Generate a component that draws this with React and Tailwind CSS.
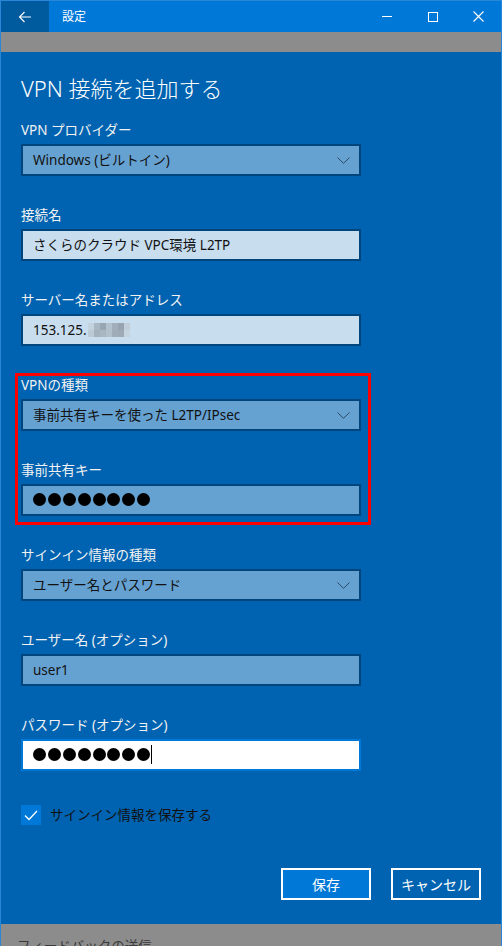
import React from "react";

const FONT = { fontFamily: '"Noto Sans", "Noto Sans CJK JP", sans-serif' };

function Chevron() {
  return (
    <svg width="13" height="7" viewBox="0 0 13 7" className="shrink-0">
      <path d="M0.5 0.5 L6.5 6.3 L12.5 0.5" fill="none" stroke="#2f4a63" strokeWidth="1" />
    </svg>
  );
}

function Dots({ n = 8 }) {
  return (
    <div className="flex gap-[1.9px] -mt-[2px]">
      {Array.from({ length: n }).map((_, i) => (
        <div key={i} className="w-[13px] h-[13px] rounded-full bg-black" />
      ))}
    </div>
  );
}

function Label({ children, className = "" }) {
  return (
    <div className={"h-[20px] leading-[20px] text-[13.5px] text-[#f2f2f2] mb-[4px] " + className}>
      {children}
    </div>
  );
}

function Select({ text }) {
  return (
    <div className="w-[340px] h-[32px] border-2 border-[#00457c] bg-[#66a2d1] flex items-center justify-between pl-[10px] pr-[9px]">
      <span className="text-[13.5px] text-[#111] leading-[20px]">{text}</span>
      <Chevron />
    </div>
  );
}

function Field({ children, light }) {
  return (
    <div
      className={
        "w-[340px] h-[32px] border-2 border-[#00457c] flex items-center pl-[10px] " +
        (light ? "bg-[#c8deef]" : "bg-[#66a2d1]")
      }
    >
      {children}
    </div>
  );
}

export default function App() {
  return (
    <div
      style={FONT}
      className="relative w-[502px] h-[946px] overflow-hidden flex flex-col border-x border-t border-[#2a86d6] bg-[#0063b1]"
    >
      {/* title bar */}
      <div className="h-[31px] shrink-0 bg-[#0078d7] flex items-stretch text-white">
        <div className="w-[48px] bg-[#005a9e] flex items-center justify-center">
          <svg width="14" height="12" viewBox="0 0 14 12">
            <path d="M13 6 H1.5 M6.5 1 L1.5 6 L6.5 11" fill="none" stroke="white" strokeWidth="1.1" />
          </svg>
        </div>
        <div className="flex items-center pl-[13px] text-[12px] flex-1">設定</div>
        <div className="w-[46px] flex items-center justify-center">
          <div className="w-[10px] h-px bg-white" />
        </div>
        <div className="w-[46px] flex items-center justify-center">
          <div className="w-[10px] h-[10px] border border-white" />
        </div>
        <div className="w-[45px] flex items-center justify-center">
          <svg width="11" height="11" viewBox="0 0 11 11">
            <path d="M0.5 0.5 L10.5 10.5 M10.5 0.5 L0.5 10.5" stroke="white" strokeWidth="1.1" />
          </svg>
        </div>
      </div>
      <div className="h-[20px] shrink-0 bg-[#8c8c8c]" />

      {/* content */}
      <div className="h-[872px] shrink-0 flex flex-col pl-[20px] pr-[20px] pt-[21px]">
        <div className="h-[30px] leading-[30px] text-[22px] text-white font-light">
          VPN 接続を追加する
        </div>

        <div className="mt-[17px]">
          <Label>VPN プロバイダー</Label>
          <Select text="Windows (ビルトイン)" />
        </div>

        <div className="mt-[29px]">
          <Label>接続名</Label>
          <Field light>
            <span className="text-[13.5px] text-[#111] leading-[20px]">さくらのクラウド VPC環境 L2TP</span>
          </Field>
        </div>

        <div className="mt-[29px]">
          <Label>サーバー名またはアドレス</Label>
          <Field light>
            <span className="text-[13.5px] text-[#111] leading-[20px]">153.125.</span>
            <div className="flex flex-col ml-[1px]">
              <div className="flex">
                <div className="w-[6px] h-[7px] bg-[#c3d2de]" />
                <div className="w-[6px] h-[7px] bg-[#a9b7c2]" />
                <div className="w-[6px] h-[7px] bg-[#98a6b1]" />
                <div className="w-[6px] h-[7px] bg-[#b4c2cd]" />
                <div className="w-[6px] h-[7px] bg-[#a2afba]" />
                <div className="w-[6px] h-[7px] bg-[#97a4af]" />
                <div className="w-[6px] h-[7px] bg-[#c0ced9]" />
              </div>
              <div className="flex">
                <div className="w-[6px] h-[7px] bg-[#bccad5]" />
                <div className="w-[6px] h-[7px] bg-[#a4b2bd]" />
                <div className="w-[6px] h-[7px] bg-[#a9b7c2]" />
                <div className="w-[6px] h-[7px] bg-[#b2c0cb]" />
                <div className="w-[6px] h-[7px] bg-[#a0adb8]" />
                <div className="w-[6px] h-[7px] bg-[#9eabb6]" />
                <div className="w-[6px] h-[7px] bg-[#c6d4df]" />
              </div>
            </div>
          </Field>
        </div>

        <div className="mt-[29px]">
          <Label>VPNの種類</Label>
          <Select text="事前共有キーを使った L2TP/IPsec" />
        </div>

        <div className="mt-[29px]">
          <Label>事前共有キー</Label>
          <Field>
            <Dots />
          </Field>
        </div>

        <div className="mt-[29px]">
          <Label>サインイン情報の種類</Label>
          <Select text="ユーザー名とパスワード" />
        </div>

        <div className="mt-[29px]">
          <Label>ユーザー名 (オプション)</Label>
          <Field>
            <span className="text-[13.5px] text-[#111] leading-[20px]">user1</span>
          </Field>
        </div>

        <div className="mt-[29px]">
          <Label>パスワード (オプション)</Label>
          <div className="w-[340px] h-[32px] border-2 border-[#0078d7] bg-white flex items-center pl-[10px]">
            <Dots />
            <div className="w-px h-[19px] bg-black ml-[1px] -mt-[1px]" />
          </div>
        </div>

        <div className="mt-[34px] flex items-center h-[20px]">
          <div className="w-[20px] h-[20px] bg-[#0078d7] flex items-center justify-center">
            <svg width="14" height="11" viewBox="0 0 14 11">
              <path d="M1 5.5 L5 9.5 L13 1" fill="none" stroke="white" strokeWidth="1.3" />
            </svg>
          </div>
          <span className="ml-[9px] text-[13.5px] text-[#111] leading-[20px]">サインイン情報を保存する</span>
        </div>

        <div className="mt-[43px] flex justify-end gap-[20px]">
          <div className="w-[90px] h-[32px] border-2 border-white bg-[#0078d7] flex items-center justify-center text-[14px] text-white">
            保存
          </div>
          <div className="w-[90px] h-[32px] border-2 border-white bg-[#0063b1] flex items-center justify-center text-[14px] text-white">
            キャンセル
          </div>
        </div>
      </div>

      {/* bottom gray band */}
      <div className="h-[22px] shrink-0 bg-[#8c8c8c] relative overflow-hidden">
        <div className="absolute left-[16px] top-[12px] text-[13.5px] leading-[20px] text-[#3a3a3a]">
          フィードバックの送信
        </div>
      </div>

      {/* red annotation box */}
      <div className="absolute left-[14px] top-[372px] w-[356px] h-[152px] border-[3px] border-[#ff0000] pointer-events-none" />
    </div>
  );
}
